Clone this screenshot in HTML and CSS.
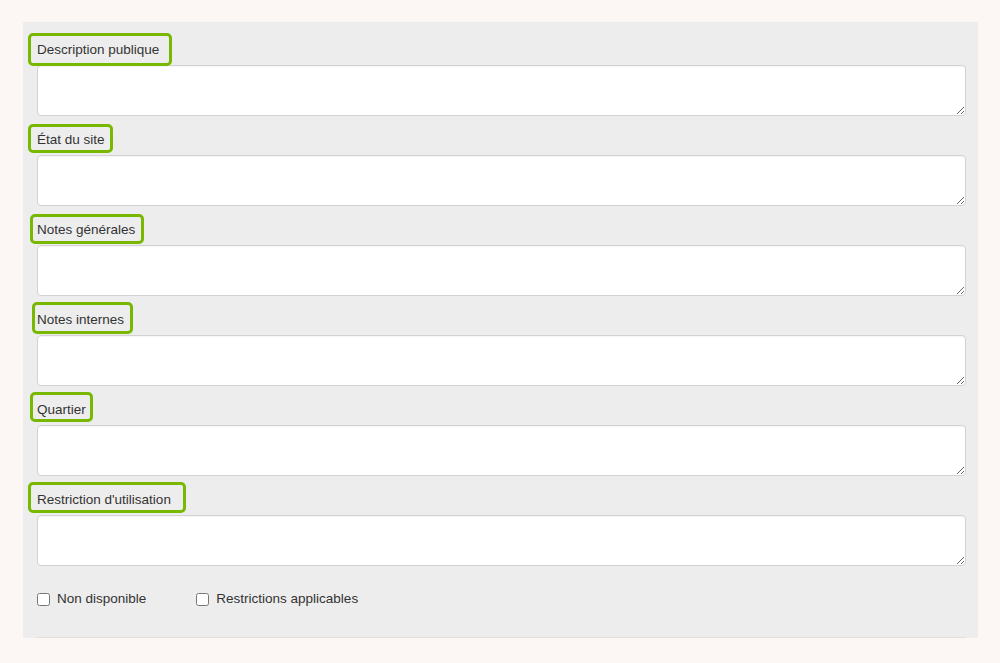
FILE: index.html
```html
<!DOCTYPE html>
<html lang="fr">
<head>
<meta charset="utf-8">
<title>Formulaire</title>
<link rel="stylesheet" href="styles.css">
</head>
<body>
<div class="page">
  <form class="panel">
    <div class="inner">
      <div class="field">
        <label class="label">Description publique<span class="hl hl-1"></span></label>
        <textarea class="input"></textarea>
      </div>
      <div class="field">
        <label class="label">État du site<span class="hl hl-2"></span></label>
        <textarea class="input"></textarea>
      </div>
      <div class="field">
        <label class="label">Notes générales<span class="hl hl-3"></span></label>
        <textarea class="input"></textarea>
      </div>
      <div class="field">
        <label class="label">Notes internes<span class="hl hl-4"></span></label>
        <textarea class="input"></textarea>
      </div>
      <div class="field">
        <label class="label">Quartier<span class="hl hl-5"></span></label>
        <textarea class="input"></textarea>
      </div>
      <div class="field field-last">
        <label class="label">Restriction d'utilisation<span class="hl hl-6"></span></label>
        <textarea class="input"></textarea>
      </div>
      <div class="checks">
        <label class="check check-1"><input type="checkbox"><span>Non disponible</span></label>
        <label class="check"><input type="checkbox"><span>Restrictions applicables</span></label>
      </div>
    </div>
  </form>
</div>
</body>
</html>
```

FILE: styles.css
```css
html, body {
  margin: 0;
  padding: 0;
  background: #fcf6f5;
}
body {
  font-family: "Liberation Sans", Arial, Helvetica, sans-serif;
  font-size: 13.5px;
  color: #333;
}
.page {
  padding: 22px 22px 0 23px;
}
.panel {
  display: block;
  margin: 0;
  width: 955px;
  background: #ededed;
  padding: 18px 12px 0 14px;
  box-sizing: border-box;
}
.inner {
  border-bottom: 1px solid #e0e0e0;
}
.field {
  display: flex;
  flex-direction: column;
  margin-bottom: 14px;
}
.field-last {
  margin-bottom: 13px;
}
.label {
  position: relative;
  display: block;
  align-self: flex-start;
  line-height: 20px;
  height: 20px;
  margin-bottom: 5px;
}
.hl {
  position: absolute;
  border: 3px solid #78b800;
  border-radius: 5px;
  box-sizing: border-box;
  pointer-events: none;
}
.hl-1 { left: -9px; top: -7px; width: 144px; height: 33px; }
.hl-2 { left: -9px; top: -6px; width: 85px; height: 29px; }
.hl-3 { left: -7px; top: -6px; width: 114px; height: 30px; }
.hl-4 { left: -5px; top: -8px; width: 101px; height: 32px; }
.hl-5 { left: -7px; top: -8px; width: 63px; height: 30px; }
.hl-6 { left: -9px; top: -8px; width: 158px; height: 31px; }
.input {
  display: block;
  width: 100%;
  height: 51px;
  box-sizing: border-box;
  margin: 0;
  border: 1px solid #d2d2d2;
  border-radius: 4px;
  background: #fff;
  box-shadow: inset 0 1px 1px rgba(0,0,0,0.04);
  font: inherit;
  padding: 6px 8px;
}
.checks {
  display: flex;
  align-items: center;
  padding: 10px 0 28px;
  height: 20px;
}
.check {
  display: flex;
  align-items: center;
  gap: 7px;
  line-height: 20px;
}
.check-1 {
  margin-right: 50px;
}
.check input {
  margin: 0;
  width: 13px;
  height: 13px;
}
```
